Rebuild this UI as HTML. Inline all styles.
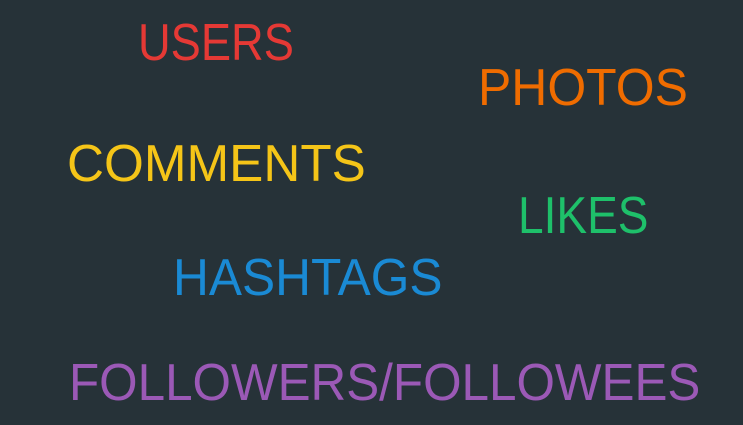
<!DOCTYPE html>
<html><head><style>
html,body{margin:0;padding:0;width:743px;height:425px;background:#263238;overflow:hidden}
div{position:absolute;font-family:"Liberation Sans",sans-serif;font-size:52px;line-height:1;white-space:nowrap;transform-origin:0 0}
</style></head><body>
<div style="left:138px;top:17px;color:#e53935;transform:scaleX(.87)">USERS</div>
<div style="left:478px;top:62px;color:#ef6c00;transform:scaleX(.96)">PHOTOS</div>
<div style="left:67px;top:138px;color:#f5c518;transform:scaleX(.985)">COMMENTS</div>
<div style="left:518px;top:190px;color:#1ec06a;transform:scaleX(.885)">LIKES</div>
<div style="left:173px;top:252px;color:#1a8ad4;transform:scaleX(.955)">HASHTAGS</div>
<div style="left:69px;top:357px;color:#9b59b6;transform:scaleX(.95)">FOLLOWERS/FOLLOWEES</div>
</body></html>
